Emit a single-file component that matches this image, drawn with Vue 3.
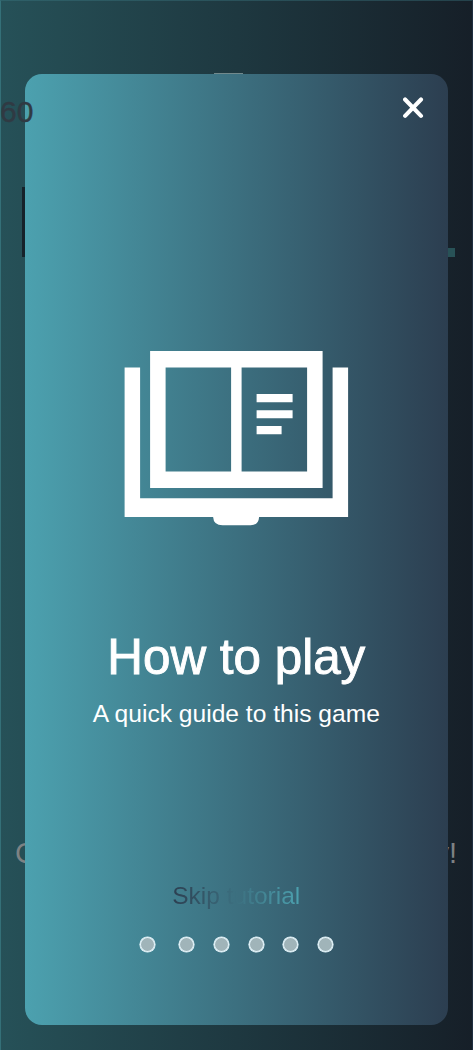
<script setup>
const steps = [1, 2, 3, 4, 5, 6]
</script>

<template>
  <div class="screen">
    <div class="page">
      <div class="tab"></div>
      <div class="board">
        <span class="post"></span>
        <span class="marker"></span>
      </div>
      <div class="message"><span>C</span><span>y!</span></div>
    </div>

    <div class="overlay">
      <section class="modal">
        <button class="close" aria-label="Close">
          <svg width="22" height="22" viewBox="0 0 22 22">
            <path d="M2.1 2.5 18 18.9M18 2.5 2.1 18.9" stroke="#fff" stroke-width="4.1" stroke-linecap="round" />
          </svg>
        </button>
        <svg class="book" width="225" height="175" viewBox="-0.6 0 225 175">
          <path fill="#fff" d="M0 16.5H15.5V147.3H208V16.5H223.5V166H134.5Q134 174.3 126 174.3H98Q89 174.3 88.5 166H0Z" />
          <path fill="#fff" fill-rule="evenodd" d="M25.5 0H198V137H25.5ZM41 16.5V120.5H106.5V16.5ZM117 16.5V120.5H182.5V16.5Z" />
          <path fill="#fff" d="M132 43H168V51.3H132ZM132 59.2H168V67.3H132ZM132 75H157V83.3H132Z" />
        </svg>
        <h1>How to play</h1>
        <p class="subtitle">A quick guide to this game</p>
        <button class="skip">Skip tutorial</button>
        <div class="dots">
          <span v-for="step in steps" :key="step" class="dot"></span>
        </div>
      </section>
    </div>

    <div class="score">60</div>
  </div>
</template>

<style>
body {
  margin: 0;
}
</style>

<style scoped>
* {
  box-sizing: border-box;
}
.screen {
  position: relative;
  width: 473px;
  height: 1050px;
  overflow: hidden;
  font-family: "Liberation Sans", Arial, sans-serif;
  background: linear-gradient(to right, #265158, #161f28);
}
.page {
  display: flex;
  flex-direction: column;
  height: 1050px;
  padding-top: 72px;
  border-top: 1px solid rgba(60, 120, 130, 0.4);
  border-left: 1px solid #347078;
  border-right: 1px solid #202f40;
}
.tab {
  width: 29px;
  height: 12px;
  margin-left: 213px;
  background: #71898c;
}
/* The score stays readable above the dialog. */
.score {
  position: absolute;
  top: 95px;
  left: 0;
  font-size: 30px;
  line-height: 34px;
  color: #303a43;
  -webkit-text-stroke: 0.4px #303a43;
}
.board {
  display: flex;
  justify-content: space-between;
  align-items: flex-end;
  height: 70px;
  margin: 102px 17px 0 20.5px;
}
.post {
  width: 10px;
  height: 70px;
  background: #16222a;
}
.marker {
  width: 20px;
  height: 9px;
  background: #285257;
}
.message {
  display: flex;
  justify-content: space-between;
  margin: 579px 15px 0 14px;
  font-size: 29px;
  line-height: 34px;
  color: #7d8284;
}
.overlay {
  position: absolute;
  inset: 0;
  padding: 74px 25px 25px;
}
.modal {
  display: flex;
  flex-direction: column;
  align-items: center;
  width: 422.6px;
  height: 951px;
  border-radius: 17px;
  color: #fff;
  background: linear-gradient(to right, #4ca1af, #2c3e50);
}
button {
  padding: 0;
  border: 0;
  font-family: inherit;
}
.close {
  align-self: flex-end;
  width: 22px;
  height: 22px;
  margin: 23px 22.6px 0 0;
  background: none;
}
.close svg,
.book {
  display: block;
}
.book {
  flex: none;
  margin-top: 232px;
}
h1 {
  margin: 102px 0 0;
  font-size: 49.4px;
  font-weight: 400;
  line-height: 58px;
  -webkit-text-stroke: 0.9px #fff;
}
.subtitle {
  margin: 14px 0 0;
  font-size: 24.6px;
  line-height: 28px;
}
.skip {
  height: 28px;
  margin-top: 154px;
  font-size: 24.5px;
  line-height: 28px;
  color: transparent;
  background: linear-gradient(to right, #2c3e50, #4ca1af);
  background-clip: text;
  -webkit-background-clip: text;
}
.dots {
  display: flex;
  gap: 19.7px;
  margin-top: 27px;
}
.dot {
  width: 15px;
  height: 15px;
  border-radius: 50%;
  background: #a0b4b9;
  box-shadow: 0 0 0 0.6px #e4f5fb, inset 0 0 0 1px #e4f5fb;
}
.dot:first-child {
  margin-right: 5px;
}
</style>
